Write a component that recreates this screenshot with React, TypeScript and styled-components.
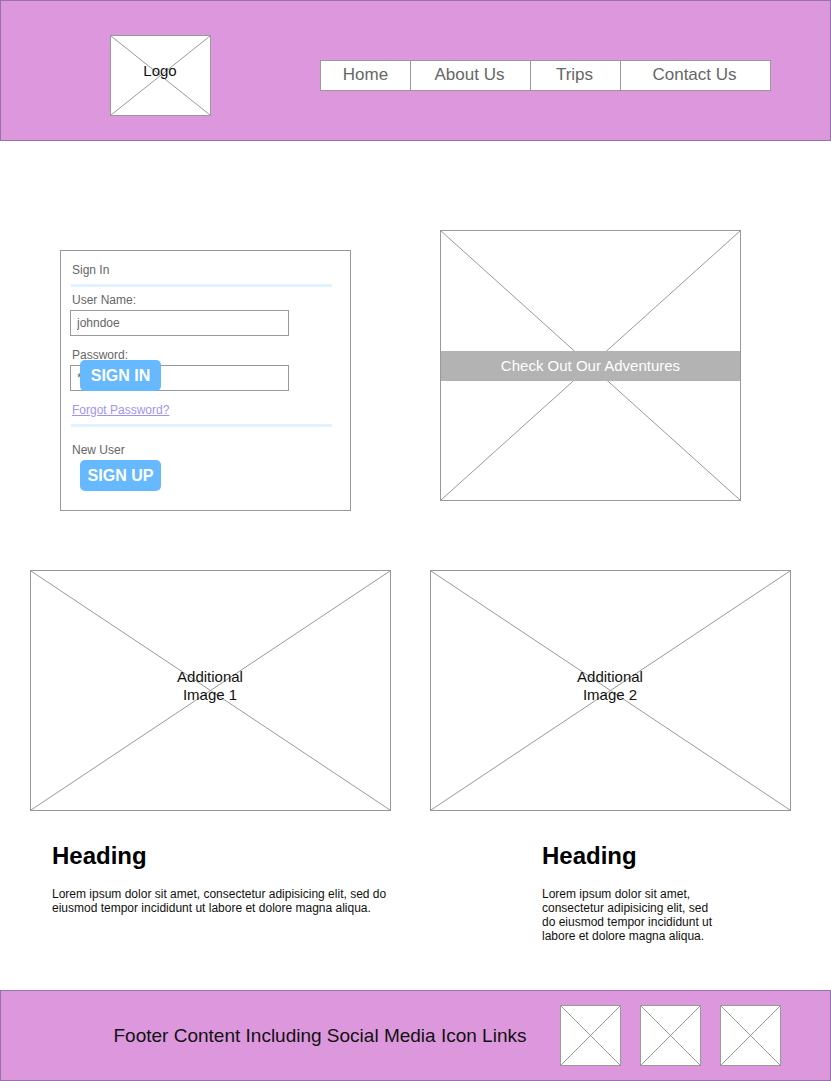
import React from "react";
import styled, { createGlobalStyle } from "styled-components";

const GlobalStyle = createGlobalStyle`
  *, *::before, *::after { box-sizing: border-box; }
  body {
    margin: 0;
    background: #ffffff;
    color: #111111;
    font-family: "Liberation Sans", Arial, Helvetica, sans-serif;
  }
`;

const Header = styled.header`
  display: flex;
  align-items: center;
  gap: 109px;
  padding: 34px 59px 24px 109px;
  background: #dd98dd;
  border: 1px solid #9673a6;
`;

const Frame = styled.div<{ $height: number; $width?: number }>`
  position: relative;
  display: flex;
  align-items: center;
  justify-content: center;
  flex: none;
  width: ${(p) => (p.$width ? `${p.$width}px` : "auto")};
  height: ${(p) => p.$height}px;
  border: 1px solid #999999;
  background: #ffffff;
`;

const Cross = styled.svg`
  position: absolute;
  inset: 0;
  width: 100%;
  height: 100%;
  stroke: #999999;
  stroke-width: 1;
`;

const Caption = styled.span`
  position: relative;
  max-width: 80px;
  padding: 0 1px 10px 0;
  font-size: 15px;
  line-height: 18px;
  text-align: center;
`;

const Nav = styled.nav`
  display: grid;
  grid-template-columns: 89fr 120fr 90fr 150fr;
  flex: 1;
  border: 1px solid #999999;
  background: #ffffff;
`;

const NavLink = styled.a`
  padding-bottom: 1px;
  color: #666666;
  font-size: 17px;
  line-height: 28px;
  text-align: center;
  text-decoration: none;

  & + & {
    padding-right: 2px;
    border-left: 1px solid #999999;
  }
`;

const Main = styled.main`
  padding: 89px 40px 47px 30px;
`;

const Columns = styled.section<{ $top?: number }>`
  display: grid;
  grid-template-columns: 1fr 1fr;
  column-gap: 39px;
  align-items: start;
  margin-top: ${(p) => p.$top ?? 0}px;
`;

const SignInCard = styled.form`
  margin: 20px 40px 0 30px;
  padding: 12px 18px 19px 9px;
  border: 1px solid #999999;
  color: #666666;
  font-size: 12px;
  line-height: 14px;
`;

const CardTitle = styled.h3`
  margin: 0;
  padding-left: 2px;
  font-size: 12px;
  font-weight: normal;
`;

const Rule = styled.hr`
  height: 3px;
  margin: 7px 0 6px 1px;
  border: 0;
  background: #e1f3fe;
`;

const Field = styled.div`
  position: relative;
  margin: 0 43px 12px 0;
`;

const Label = styled.label`
  display: block;
  padding-left: 2px;
  margin-bottom: 3px;
`;

const TextBox = styled.input`
  display: block;
  width: 100%;
  height: 26px;
  padding: 0 6px;
  border: 1px solid #999999;
  border-radius: 0;
  background: #ffffff;
  color: #666666;
  font: inherit;
`;

const ForgotLink = styled.a`
  display: block;
  width: fit-content;
  margin-left: 2px;
  color: #9f94f0;
`;

const NewUser = styled.div`
  padding-top: 10px;
`;

const NewUserText = styled.p`
  margin: 0 0 3px;
  padding-left: 2px;
`;

const ActionButton = styled.button<{ $floating?: boolean }>`
  display: block;
  width: 81px;
  height: 31px;
  padding: 0;
  border: 0;
  border-radius: 5px;
  background: #66b8ff;
  color: #ffffff;
  font: bold 16px/31px "Liberation Sans", Arial, sans-serif;
  ${(p) =>
    p.$floating
      ? "position: absolute; left: 10px; bottom: 0;"
      : "margin-left: 10px;"}
`;

const Promo = styled.div`
  margin: 0 50px 0 10px;
`;

const Banner = styled.a`
  position: relative;
  width: 100%;
  background: #b3b3b3;
  color: #ffffff;
  font-size: 15px;
  line-height: 30px;
  text-align: center;
  text-decoration: none;
`;

const Article = styled.article<{ $left: number; $right: number }>`
  padding: 0 ${(p) => p.$right}px 0 ${(p) => p.$left}px;
`;

const Heading = styled.h2`
  margin: 0 0 17px;
  color: #000000;
  font-size: 24px;
  line-height: 28px;
`;

const Copy = styled.p`
  margin: 0;
  font-size: 12px;
  line-height: 14px;
`;

const Footer = styled.footer`
  display: flex;
  align-items: center;
  padding: 14px 49px 14px 79px;
  background: #dd98dd;
  border: 1px solid #9673a6;
`;

const FooterText = styled.p`
  flex: 1;
  margin: 0;
  font-size: 19px;
  line-height: 22px;
  text-align: center;
`;

const Socials = styled.div`
  display: flex;
  gap: 19px;
`;

type PlaceholderProps = {
  height: number;
  width?: number;
  children?: React.ReactNode;
};

function Placeholder({ height, width, children }: PlaceholderProps) {
  return (
    <Frame $height={height} $width={width}>
      <Cross aria-hidden="true">
        <line x1="0" y1="0" x2="100%" y2="100%" />
        <line x1="100%" y1="0" x2="0" y2="100%" />
      </Cross>
      {children}
    </Frame>
  );
}

const lorem =
  "Lorem ipsum dolor sit amet, consectetur adipisicing elit, sed do eiusmod tempor incididunt ut labore et dolore magna aliqua.";

export default function App() {
  return (
    <>
      <GlobalStyle />
      <Header>
        <Placeholder height={81} width={101}>
          <Caption>Logo</Caption>
        </Placeholder>
        <Nav>
          {["Home", "About Us", "Trips", "Contact Us"].map((name) => (
            <NavLink key={name} href="#">
              {name}
            </NavLink>
          ))}
        </Nav>
      </Header>

      <Main>
        <Columns>
          <SignInCard onSubmit={(e) => e.preventDefault()}>
            <CardTitle>Sign In</CardTitle>
            <Rule />
            <Field>
              <Label htmlFor="username">User Name:</Label>
              <TextBox id="username" defaultValue="johndoe" />
            </Field>
            <Field>
              <Label htmlFor="password">Password:</Label>
              <TextBox id="password" defaultValue="********" autoComplete="off" />
              <ActionButton type="submit" $floating>
                SIGN IN
              </ActionButton>
            </Field>
            <ForgotLink href="#">Forgot Password?</ForgotLink>
            <Rule />
            <NewUser>
              <NewUserText>New User</NewUserText>
              <ActionButton type="button">SIGN UP</ActionButton>
            </NewUser>
          </SignInCard>
          <Promo>
            <Placeholder height={271}>
              <Banner href="#">Check Out Our Adventures</Banner>
            </Placeholder>
          </Promo>
        </Columns>

        <Columns $top={59}>
          <Placeholder height={241}>
            <Caption>Additional Image 1</Caption>
          </Placeholder>
          <Placeholder height={241}>
            <Caption>Additional Image 2</Caption>
          </Placeholder>
        </Columns>

        <Columns $top={31}>
          <Article $left={22} $right={0}>
            <Heading>Heading</Heading>
            <Copy>{lorem}</Copy>
          </Article>
          <Article $left={112} $right={70}>
            <Heading>Heading</Heading>
            <Copy>{lorem}</Copy>
          </Article>
        </Columns>
      </Main>

      <Footer>
        <FooterText>Footer Content Including Social Media Icon Links</FooterText>
        <Socials>
          <Placeholder height={61} width={61} />
          <Placeholder height={61} width={61} />
          <Placeholder height={61} width={61} />
        </Socials>
      </Footer>
    </>
  );
}
